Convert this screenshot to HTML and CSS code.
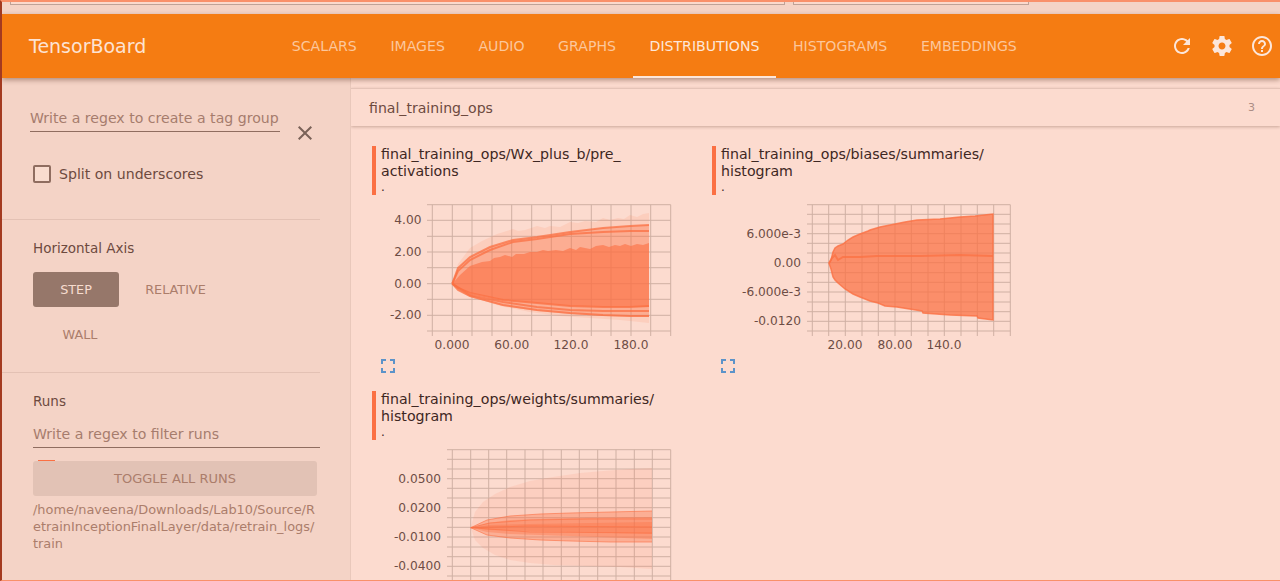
FILE: index.html
```html
<!DOCTYPE html>
<html lang="en">
<head>
    <meta charset="UTF-8">
    <meta name="viewport" content="width=device-width, initial-scale=1.0">
    <title>TensorBoard</title>
    <link rel="stylesheet" href="styles.css">
</head>
<body>
    <div class="window-strip">
        <div class="strip-field strip-field-wide"></div>
        <div class="strip-field strip-field-small"></div>
    </div>
    <header class="toolbar">
        <div class="brand">TensorBoard</div>
        <nav class="tabs">
            <a class="tab">SCALARS</a>
            <a class="tab">IMAGES</a>
            <a class="tab">AUDIO</a>
            <a class="tab">GRAPHS</a>
            <a class="tab tab-active">DISTRIBUTIONS</a>
            <a class="tab">HISTOGRAMS</a>
            <a class="tab">EMBEDDINGS</a>
        </nav>
        <div class="toolbar-icons">
            <svg class="toolbar-icon" viewBox="0 0 24 24"><path d="M17.65 6.35C16.2 4.9 14.21 4 12 4c-4.42 0-7.99 3.58-7.99 8s3.57 8 7.99 8c3.73 0 6.84-2.55 7.73-6h-2.08c-.82 2.33-3.04 4-5.65 4-3.31 0-6-2.69-6-6s2.69-6 6-6c1.66 0 3.14.69 4.22 1.78L13 11h7V4l-2.35 2.35z"/></svg>
            <svg class="toolbar-icon" viewBox="0 0 24 24"><path d="M19.43 12.98c.04-.32.07-.64.07-.98s-.03-.66-.07-.98l2.11-1.65c.19-.15.24-.42.12-.64l-2-3.46c-.12-.22-.39-.3-.61-.22l-2.49 1c-.52-.4-1.08-.73-1.69-.98l-.38-2.65C14.46 2.18 14.25 2 14 2h-4c-.25 0-.46.18-.49.42l-.38 2.65c-.61.25-1.17.59-1.69.98l-2.49-1c-.23-.09-.49 0-.61.22l-2 3.46c-.13.22-.07.49.12.64l2.11 1.65c-.04.32-.07.65-.07.98s.03.66.07.98l-2.11 1.65c-.19.15-.24.42-.12.64l2 3.46c.12.22.39.3.61.22l2.49-1c.52.4 1.08.73 1.69.98l.38 2.65c.03.24.24.42.49.42h4c.25 0 .46-.18.49-.42l.38-2.65c.61-.25 1.17-.59 1.69-.98l2.49 1c.23.09.49 0 .61-.22l2-3.46c.12-.22.07-.49-.12-.64l-2.11-1.65zM12 15.5c-1.93 0-3.5-1.57-3.5-3.5s1.57-3.5 3.5-3.5 3.5 1.57 3.5 3.5-1.57 3.5-3.5 3.5z"/></svg>
            <svg class="toolbar-icon" viewBox="0 0 24 24"><path d="M11 18h2v-2h-2v2zm1-16C6.48 2 2 6.48 2 12s4.48 10 10 10 10-4.48 10-10S17.52 2 12 2zm0 18c-4.41 0-8-3.59-8-8s3.59-8 8-8 8 3.59 8 8-3.59 8-8 8zm0-14c-2.21 0-4 1.79-4 4h2c0-1.1.9-2 2-2s2 .9 2 2c0 2-3 1.75-3 5h2c0-2.25 3-2.5 3-5 0-2.21-1.79-4-4-4z"/></svg>
        </div>
    </header>
    <div class="main">
        <aside class="sidebar">
            <section class="side-section side-tags">
                <div class="tag-row">
                    <div class="tag-input">Write a regex to create a tag group</div>
                    <svg class="close-icon" viewBox="0 0 24 24"><path d="M19 6.41L17.59 5 12 10.59 6.41 5 5 6.41 10.59 12 5 17.59 6.41 19 12 13.41 17.59 19 19 17.59 13.41 12 19 6.41z"/></svg>
                </div>
                <label class="split-row"><span class="checkbox"></span>Split on underscores</label>
            </section>
            <section class="side-section side-axis">
                <div class="side-title">Horizontal Axis</div>
                <div class="axis-buttons">
                    <div class="axis-btn axis-btn-active">STEP</div>
                    <div class="axis-btn">RELATIVE</div>
                    <div class="axis-btn">WALL</div>
                </div>
            </section>
            <section class="side-section side-runs">
                <div class="side-title">Runs</div>
                <div class="runs-input">Write a regex to filter runs</div>
                <div class="run-mark"></div>
                <div class="toggle-btn">TOGGLE ALL RUNS</div>
                <div class="run-path">/home/naveena/Downloads/Lab10/Source/RetrainInceptionFinalLayer/data/retrain_logs/train</div>
            </section>
        </aside>
        <main class="content">
            <div class="category">
                <span>final_training_ops</span>
                <span class="category-count">3</span>
            </div>
            <div class="cards">
                <div class="card">
                    <div class="card-title">
                        <div>final_training_ops/Wx_plus_b/pre_<br>activations</div>
                        <div class="card-run">.</div>
                    </div>
                    <svg class="chart" viewBox="372 200 310 153">
                        <g class="grid">
                            <path d="M432.3 204.7V336M452.3 204.7V336M472 204.7V336M492 204.7V336M511.7 204.7V336M531.7 204.7V336M551.3 204.7V336M571.3 204.7V336M591.3 204.7V336M611 204.7V336M631 204.7V336M650.7 204.7V336M670.7 204.7V336"/>
                            <path d="M427 204.7H670.7M427 220.3H670.7M427 236.3H670.7M427 252H670.7M427 267.7H670.7M427 283.7H670.7M427 299.3H670.7M427 315.3H670.7M427 331H670.7"/>
                        </g>
                        <polygon class="band-light" points="452.3,283.7 458,264 470,248 482,241 497,234 513,229 518,231 525,230 537,226 545,228 550,226 560,227 570,222 578,223 585,221 596,222 603,218 610,220 618,218 624,219 630,215 637,217 643,214 649,213 649,323 620,320 590,318 560,316 530,312 500,306 470,296 458,290"/>
                        <polygon class="band-mid" points="452.3,283.7 458,268 470,257 490,247 513,240 537,237 570,232 603,228 630,226 649,225 649,317 603,316 570,314 537,311 503,306 470,297 458,290"/>
                        <polygon class="band-dark" points="452.3,283.7 460,275 470,266 476,264 482,262 490,261 494,258 500,257 505,255 512,257 516,254 524,254 530,252 537,252 543,250 548,251 556,250 563,251 570,248 576,250 580,247 590,249 596,246 603,245 609,247 615,245 620,246 625,244 631,246 637,244 643,245 649,243 649,307 603,307 570,306 537,303 503,300 470,293 458,288"/>
                        <polyline class="line" points="452.3,283.7 458,268 470,257 490,247 513,240 537,237 570,232 603,228 630,226 649,225"/>
                        <polyline class="line" points="452.3,283.7 458,271 470,260 490,250 513,242 537,239 570,234 603,232 630,231 649,231"/>
                        <polyline class="line" points="452.3,283.7 458,288 470,293 503,300 537,303 570,306 603,307 630,307 649,306"/>
                        <polyline class="line" points="452.3,283.7 458,290 470,296 503,305 537,310 570,313 603,315 630,316 649,316"/>
                        <polyline class="line" points="452.3,283.7 470,295 503,302 537,307 570,310 603,311 649,311"/>
                        <g class="axis-y">
                            <text x="421.5" y="224.3">4.00</text>
                            <text x="421.5" y="256">2.00</text>
                            <text x="421.5" y="287.6">0.00</text>
                            <text x="421.5" y="319.2">-2.00</text>
                        </g>
                        <g class="axis-x">
                            <text x="452" y="349">0.000</text>
                            <text x="511.7" y="349">60.00</text>
                            <text x="571" y="349">120.0</text>
                            <text x="631" y="349">180.0</text>
                        </g>
                    </svg>
                    <svg class="fit-icon" viewBox="0 0 24 24"><path d="M7 14H5v5h5v-2H7v-3zm-2-4h2V7h3V5H5v5zm12 7h-3v2h5v-5h-2v3zM14 5v2h3v3h2V5h-5z"/></svg>
                </div>
                <div class="card">
                    <div class="card-title">
                        <div>final_training_ops/biases/summaries/<br>histogram</div>
                        <div class="card-run">.</div>
                    </div>
                    <svg class="chart" viewBox="712 200 310 153">
                        <g class="grid">
                            <path d="M812.3 204.7V336M828.7 204.7V336M845.3 204.7V336M862 204.7V336M878.3 204.7V336M895 204.7V336M911.3 204.7V336M928 204.7V336M944.3 204.7V336M961 204.7V336M977.3 204.7V336M993.7 204.7V336M1010.3 204.7V336"/>
                            <path d="M807 204.7H1010.3M807 214.3H1010.3M807 224H1010.3M807 233.7H1010.3M807 243.3H1010.3M807 253H1010.3M807 262.7H1010.3M807 272.7H1010.3M807 282.3H1010.3M807 292H1010.3M807 302H1010.3M807 311.7H1010.3M807 321.3H1010.3M807 331H1010.3"/>
                        </g>
                        <polygon class="band-solid" points="829,263.3 831,260 833,252 835,248 838,246 843,244 848,240 853,237 860,234 868,231 870,230 880,227 890,225 905,222 917,220 940,219 960,217 975,216 993,214 993,320 978,318 977,316 950,315 923,313 922,311 897,307 885,306 878,303 870,301 860,297 853,294 845,289 838,283 835,280 833,277 831,269"/>
                        <polygon class="band-edge" points="829,263.3 831,260 833,252 835,248 838,246 843,244 848,240 853,237 860,234 868,231 870,230 880,227 890,225 905,222 917,220 940,219 960,217 975,216 993,214 993,320 978,318 977,316 950,315 923,313 922,311 897,307 885,306 878,303 870,301 860,297 853,294 845,289 838,283 835,280 833,277 831,269"/>
                        <polyline class="line" points="829,263.3 832,258 835,255 838,260 843,257 860,257 877,256 920,256 960,255 993,256"/>
                        <g class="axis-y">
                            <text x="801" y="238">6.000e-3</text>
                            <text x="801" y="267">0.00</text>
                            <text x="801" y="296">-6.000e-3</text>
                            <text x="801" y="325">-0.0120</text>
                        </g>
                        <g class="axis-x">
                            <text x="845" y="349">20.00</text>
                            <text x="895" y="349">80.00</text>
                            <text x="944" y="349">140.0</text>
                        </g>
                    </svg>
                    <svg class="fit-icon" viewBox="0 0 24 24"><path d="M7 14H5v5h5v-2H7v-3zm-2-4h2V7h3V5H5v5zm12 7h-3v2h5v-5h-2v3zM14 5v2h3v3h2V5h-5z"/></svg>
                </div>
                <div class="card">
                    <div class="card-title">
                        <div>final_training_ops/weights/summaries/<br>histogram</div>
                        <div class="card-run">.</div>
                    </div>
                    <svg class="chart chart-cut" viewBox="372 445 310 136">
                        <g class="grid">
                            <path d="M452.3 449.7V581M470.7 449.7V581M488.7 449.7V581M506.7 449.7V581M525 449.7V581M543 449.7V581M561.3 449.7V581M579.3 449.7V581M597.7 449.7V581M616 449.7V581M634.3 449.7V581M652.3 449.7V581M670.7 449.7V581"/>
                            <path d="M447 449.7H670.7M447 459.3H670.7M447 469H670.7M447 478.7H670.7M447 488.3H670.7M447 498H670.7M447 507.7H670.7M447 517.7H670.7M447 527.3H670.7M447 537H670.7M447 547H670.7M447 556.7H670.7M447 566.3H670.7M447 576H670.7"/>
                        </g>
                        <polygon class="band-faint" points="470.7,527.7 475,512 483,502 495,494 510,487 530,481 553,477 580,473 603,471 630,469 652,468 652,569 620,567 585,566 553,565 530,563 510,560 495,555 483,548 475,540"/>
                        <polygon class="band-mid" points="470.7,527.7 487,520 510,516 540,514 570,513 610,512 652,511 652,542 610,542 570,541 540,540 510,538 487,535"/>
                        <polygon class="band-mid" points="470.7,527.7 487,523 510,520 570,518 652,517 652,539 570,536 510,534 487,532"/>
                        <polygon class="band-mid" points="470.7,527.7 490,525 530,524 652,522 652,534 530,531 490,530"/>
                        <polyline class="line-thin" points="470.7,527.7 487,520 510,516 540,514 570,513 610,512 652,511"/>
                        <polyline class="line-thin" points="470.7,527.7 490,523 530,520 590,519 652,519"/>
                        <polyline class="line-thin" points="470.7,527.7 530,526 652,527"/>
                        <polyline class="line-thin" points="470.7,527.7 530,532 652,533"/>
                        <polyline class="line-thin" points="470.7,527.7 487,535 510,538 540,540 570,541 610,542 652,542"/>
                        <g class="axis-y">
                            <text x="441" y="483">0.0500</text>
                            <text x="441" y="512">0.0200</text>
                            <text x="441" y="541">-0.0100</text>
                            <text x="441" y="570">-0.0400</text>
                        </g>
                    </svg>
                </div>
            </div>
        </main>
    </div>
</body>
</html>
```

FILE: styles.css
```css
* {
    box-sizing: border-box;
}
html, body {
    height: 100%;
}
body {
    display: flex;
    flex-direction: column;
    height: 581px;
    margin: 0;
    overflow: hidden;
    background: #fcdbcf;
    border-top: 2px solid #f9906a;
    border-bottom: 1px solid #f9906a;
    border-left: 2px solid #a33a20;
    font-family: "DejaVu Sans", sans-serif;
    color: #4a2f28;
}
.window-strip {
    display: flex;
    gap: 8px;
    flex: 0 0 12px;
    padding-left: 8px;
    background: #f4d3c6;
}
.strip-field {
    height: 3px;
    background: #fbd9cc;
    border: 1px solid #bfa297;
    border-top: none;
}
.strip-field-wide {
    width: 775px;
}
.strip-field-small {
    width: 236px;
}
.toolbar {
    display: flex;
    align-items: center;
    flex: 0 0 64px;
    position: relative;
    z-index: 2;
    background: #f57c12;
    box-shadow: 0 2px 5px rgba(90, 50, 30, 0.45);
}
.brand {
    width: 273px;
    padding-left: 27px;
    font-size: 19px;
    color: #fde3d3;
}
.tabs {
    display: flex;
    align-self: stretch;
    flex: 1;
}
.tab {
    display: flex;
    align-items: center;
    padding: 2px 16.8px 0;
    border-bottom: 2px solid transparent;
    font-size: 14.1px;
    color: #fcc79c;
}
.tab-active {
    color: #fde7da;
    border-bottom-color: #fde7da;
}
.toolbar-icons {
    display: flex;
    gap: 16px;
    padding-right: 6px;
}
.toolbar-icon {
    width: 24px;
    height: 24px;
    fill: #fce6da;
}
.main {
    display: flex;
    flex: 1;
    min-height: 0;
    overflow: hidden;
}
.sidebar {
    flex: 0 0 349px;
    padding-right: 30px;
    background: #f4d3c6;
    border-right: 1px solid #e9c8bb;
    color: #6d4a3f;
}
.side-section {
    padding-left: 31px;
    border-bottom: 1px solid #e3c1b4;
}
.side-tags {
    height: 142px;
    padding-top: 30px;
}
.tag-row {
    display: flex;
    align-items: flex-start;
}
.tag-input {
    width: 250px;
    margin-left: -3px;
    padding-bottom: 3px;
    border-bottom: 1px solid #8f6d60;
    font-size: 14.1px;
    line-height: 20px;
    color: #a67c6d;
    white-space: nowrap;
}
.close-icon {
    width: 24px;
    height: 24px;
    margin: 13px 0 0 13px;
    fill: #7a6258;
}
.split-row {
    display: flex;
    align-items: center;
    gap: 8px;
    margin-top: 20px;
    font-size: 14.1px;
    color: #6d4a3f;
}
.checkbox {
    width: 18px;
    height: 18px;
    background: #f9dccf;
    border: 2px solid #8f6d60;
    border-radius: 2px;
}
.side-axis {
    height: 153px;
    padding-top: 19px;
}
.side-title {
    font-size: 13.5px;
    line-height: 18px;
}
.axis-buttons {
    display: flex;
    flex-wrap: wrap;
    margin-top: 15px;
    width: 200px;
    row-gap: 10px;
}
.axis-btn {
    display: flex;
    align-items: center;
    justify-content: center;
    width: 86px;
    height: 35px;
    font-size: 12.8px;
    color: #ab7d6b;
}
.axis-btn:nth-child(2) {
    width: 113px;
}
.axis-btn-active {
    background: #96776a;
    border-radius: 3px;
    color: #f6dccf;
}
.axis-btn:last-child {
    width: 94px;
}
.side-runs {
    padding-top: 19px;
    border-bottom: none;
}
.runs-input {
    margin-top: 14px;
    padding-bottom: 3px;
    border-bottom: 1px solid #8f6d60;
    font-size: 14.1px;
    line-height: 20px;
    color: #a67c6d;
}
.run-mark {
    width: 17px;
    height: 1px;
    margin: 12px 0 0 5px;
    background: #fb7043;
}
.toggle-btn {
    display: flex;
    align-items: center;
    justify-content: center;
    width: 284px;
    height: 35px;
    background: #e2c2b5;
    border-radius: 3px;
    font-size: 13px;
    color: #ab7d6b;
}
.run-path {
    width: 284px;
    margin-top: 5px;
    font-size: 12.9px;
    line-height: 17px;
    color: #ab7d6b;
    word-break: break-all;
}
.content {
    flex: 1;
    min-width: 0;
    padding-top: 10px;
    overflow: hidden;
}
.category {
    display: flex;
    justify-content: space-between;
    align-items: center;
    height: 38px;
    padding: 0 25px 0 18px;
    background: #fcdbcf;
    border-top: 1px solid #e5c4b8;
    box-shadow: 0 1px 3px rgba(90, 50, 30, 0.3);
    font-size: 14.1px;
    color: #6d4a3f;
}
.category-count {
    font-size: 11px;
    color: #ab8d85;
}
.cards {
    display: flex;
    flex-wrap: wrap;
    padding: 20px 0 0 21px;
}
.card {
    width: 340px;
    height: 245px;
}
.card-title {
    width: 310px;
    height: 49px;
    padding-left: 5px;
    border-left: 4px solid #fb7043;
    font-size: 14.2px;
    line-height: 17px;
    color: #3e2723;
}
.card-run {
    font-size: 12px;
    line-height: 15px;
}
.chart {
    display: block;
    width: 310px;
    height: 153px;
    margin-top: 5px;
}
.chart-cut {
    height: 136px;
}
.grid path {
    fill: none;
    stroke: #cfb0a3;
    stroke-width: 1;
}
.axis-y text, .axis-x text {
    font-size: 12.2px;
    fill: #6d4c44;
}
.axis-y text {
    text-anchor: end;
}
.axis-x text {
    text-anchor: middle;
}
.band-light {
    fill: #fb7043;
    opacity: 0.12;
}
.band-faint {
    fill: #fb7043;
    opacity: 0.1;
}
.band-mid {
    fill: #fb7043;
    opacity: 0.35;
}
.band-dark {
    fill: #fb7043;
    opacity: 0.62;
}
.band-solid {
    fill: #fb7043;
    opacity: 0.72;
}
.band-edge {
    fill: none;
    stroke: #fb7043;
    stroke-width: 1.5;
    opacity: 0.8;
}
.line {
    fill: none;
    stroke: #fb7043;
    stroke-width: 2;
    opacity: 0.75;
}
.line-thin {
    fill: none;
    stroke: #fb7043;
    stroke-width: 1;
    opacity: 0.6;
}
.fit-icon {
    display: block;
    width: 24px;
    height: 24px;
    margin: 1px 0 0 4px;
    fill: #5c93c9;
}
```
